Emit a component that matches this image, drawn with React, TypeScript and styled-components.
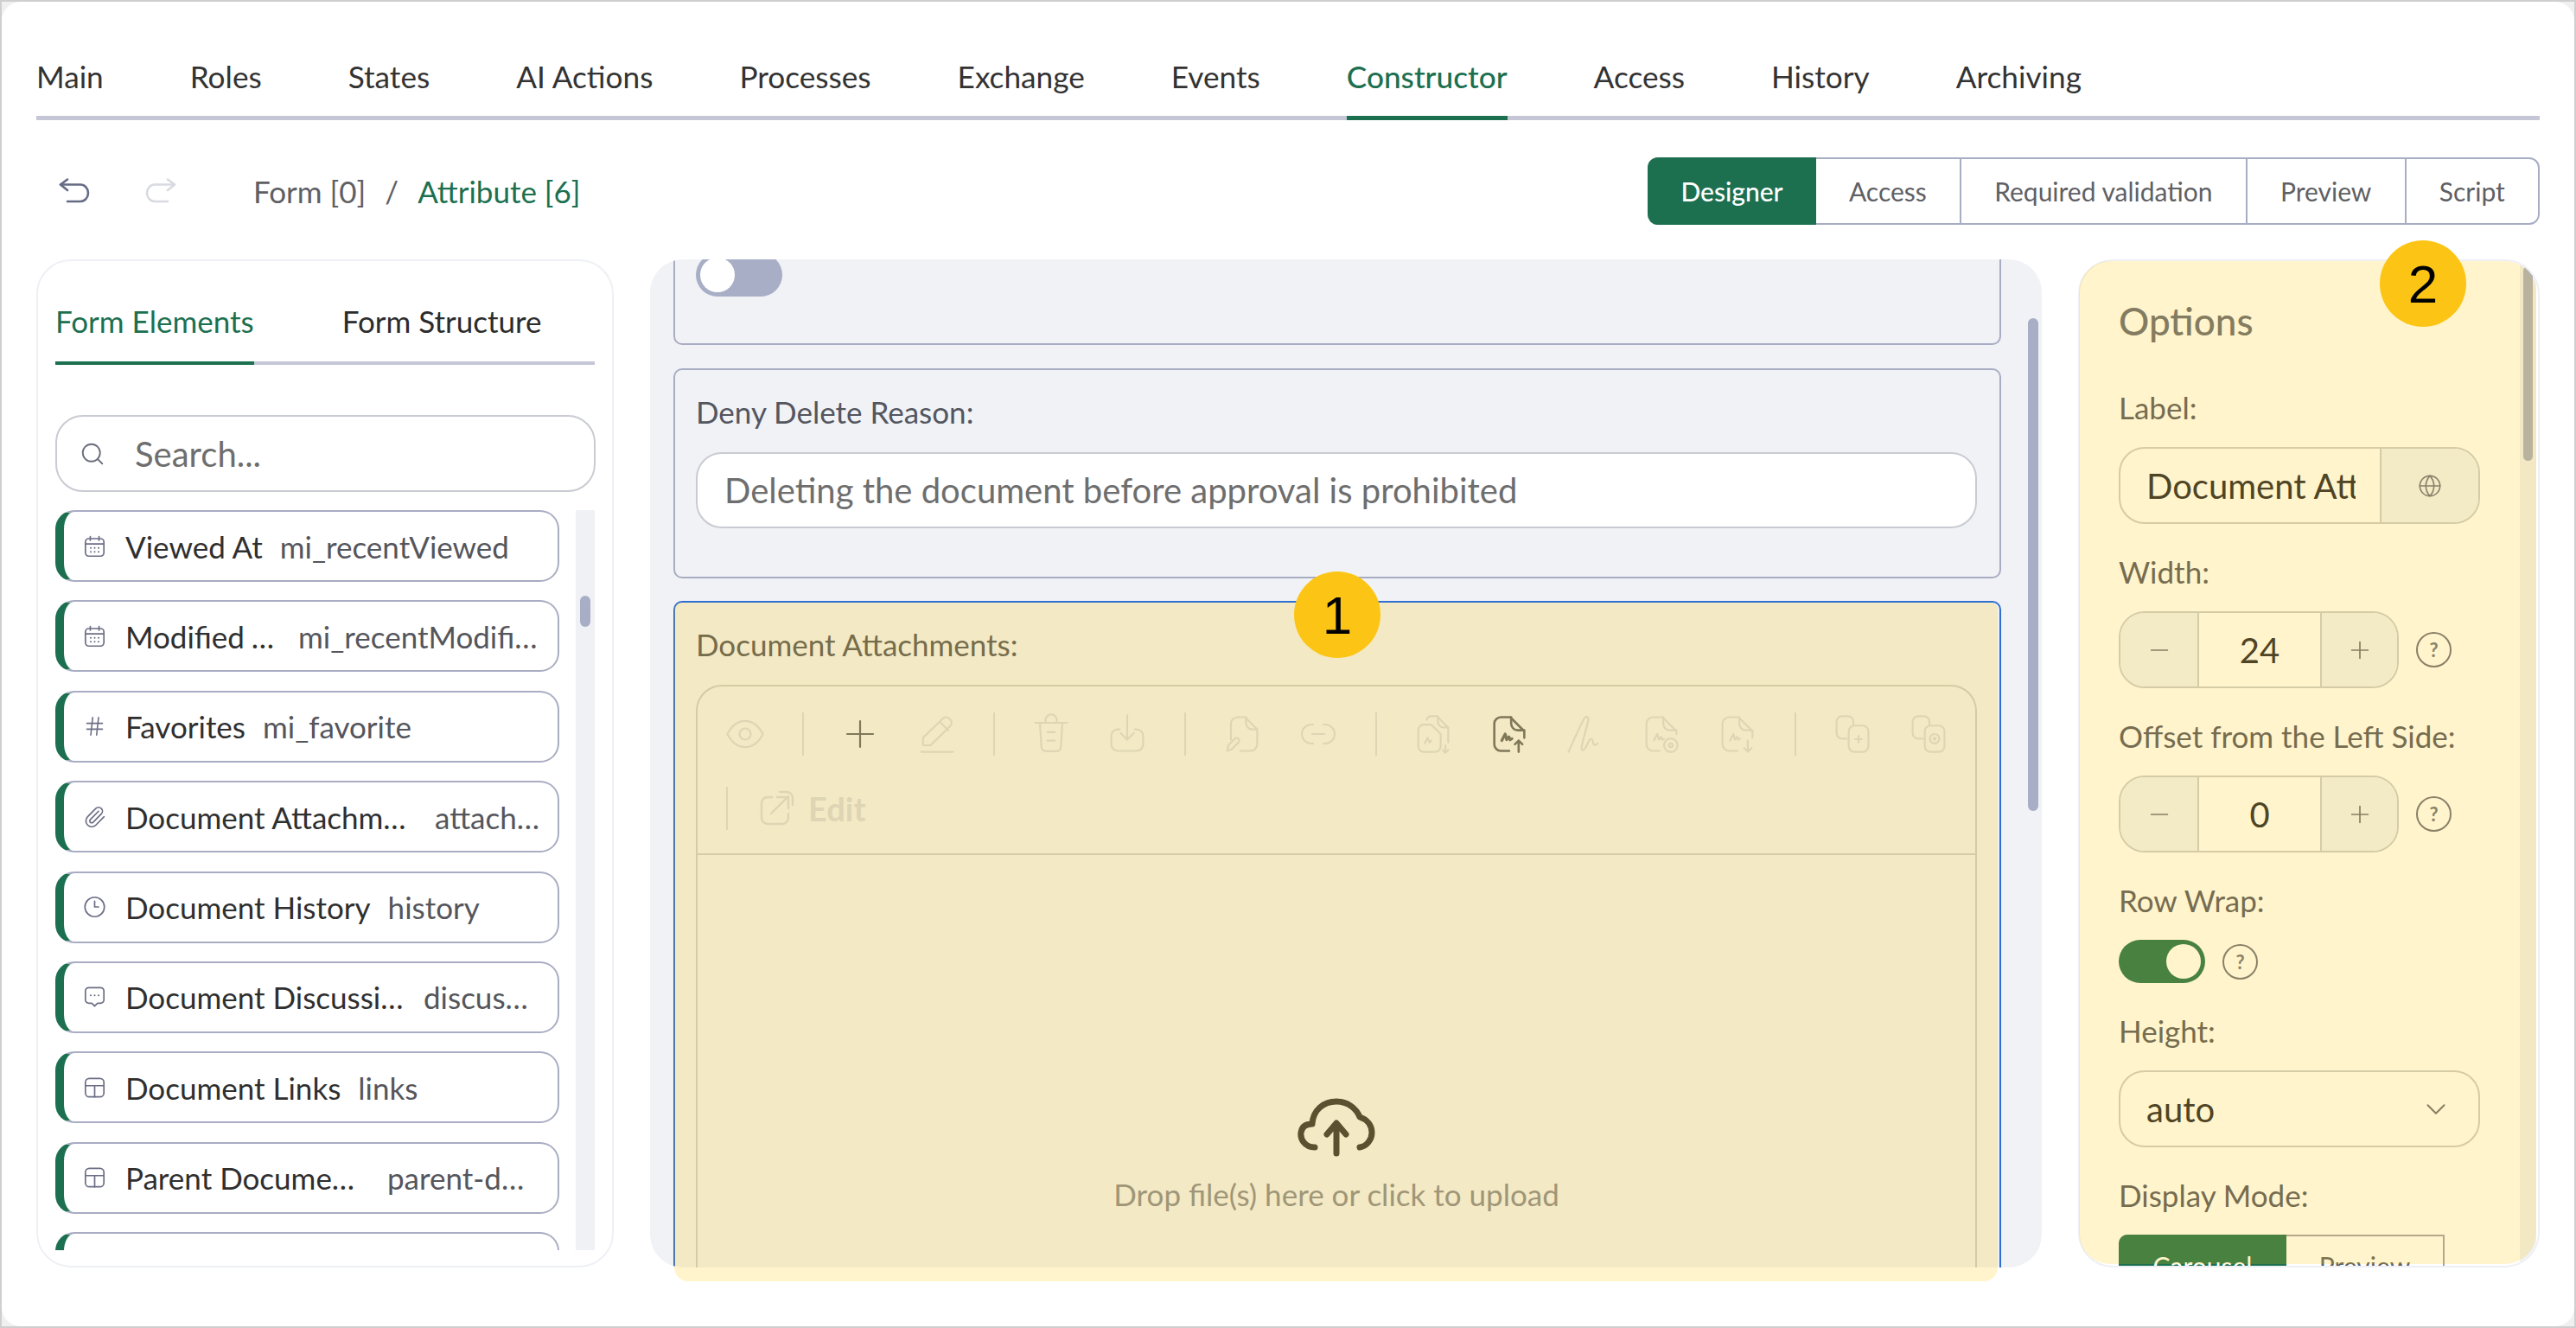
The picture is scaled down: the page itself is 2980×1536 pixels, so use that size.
import React from "react";
import styled, { createGlobalStyle } from "styled-components";
import { Clock3, Globe, Hash, Minus, Paperclip, Plus, Search, ChevronDown } from "lucide-react";

const GREEN = "#1c7050";
const LINE = "#a9adc3";

const Global = createGlobalStyle`
  html, body { margin: 0; padding: 0; background: #fff; }
  * { box-sizing: border-box; }
  body { font-family: Lato, "Open Sans", sans-serif; color: #333; }
`;

const Frame = styled.div`
  position: relative;
  width: 2980px;
  height: 1536px;
  border: 2px solid #cfcfcf;
  background: #f0f0f0;
  overflow: hidden;
`;
const Page = styled.div`
  height: 100%;
  background: #fff;
  border-radius: 22px;
  padding: 0 40px;
  display: flex;
  flex-direction: column;
`;

/* Top tabs */
const TopTabs = styled.nav`
  margin-top: 68px;
  display: flex;
  gap: 100px;
  border-bottom: 5px solid #c5c7d6;
`;
const TopTab = styled.div<{ $active?: boolean }>`
  font-size: 35.2px;
  line-height: 36px;
  padding-bottom: 28px;
  margin-bottom: -5px;
  color: ${(p) => (p.$active ? GREEN : "#333")};
  font-weight: ${(p) => (p.$active ? 500 : 400)};
  border-bottom: 5px solid ${(p) => (p.$active ? GREEN : "transparent")};
`;

/* Toolbar */
const Toolbar = styled.div`
  margin-top: 43px;
  height: 78px;
  display: flex;
  align-items: center;
`;
const History = styled.div`
  display: flex;
  gap: 64px;
  margin-left: 26px;
`;
const HistoryBtn = styled.span<{ $off?: boolean }>`
  display: flex;
  color: ${(p) => (p.$off ? "#d8dae2" : "#666b85")};
`;
const Crumbs = styled.div`
  margin-left: 89px;
  font-size: 35px;
  line-height: 40px;
  color: #5f6064;
  display: flex;
  gap: 22px;
`;
const CrumbNow = styled.span`
  color: ${GREEN};
`;
const Segments = styled.div`
  margin-left: auto;
  height: 78px;
  display: flex;
  border: 2px solid ${LINE};
  border-radius: 12px;
`;
const Segment = styled.div<{ $active?: boolean }>`
  display: flex;
  align-items: center;
  padding: 0 38.2px;
  font-size: 30px;
  color: ${(p) => (p.$active ? "#fff" : "#5f6064")};
  background: ${(p) => (p.$active ? GREEN : "transparent")};
  margin: ${(p) => (p.$active ? "-2px 0 -2px -2px" : "0")};
  border-radius: ${(p) => (p.$active ? "12px 0 0 12px" : "0")};
  font-weight: ${(p) => (p.$active ? 500 : 400)};
  & + & {
    border-left: ${(p) => (p.$active ? "0" : `2px solid ${LINE}`)};
  }
`;
const FirstPlain = styled(Segment)`
  && {
    border-left: 0;
  }
`;

/* Columns */
const Columns = styled.div`
  margin-top: 40px;
  display: grid;
  grid-template-columns: 668px 1610px 534px;
  gap: 42px;
  height: 1166px;
`;
const SidePanel = styled.section`
  border: 2px solid #eef0f5;
  border-radius: 40px;
  background: #fff;
  display: flex;
  flex-direction: column;
  padding: 0 20px 18px;
  overflow: hidden;
`;
const PanelTabs = styled.div`
  padding-top: 51px;
  display: flex;
  gap: 102px;
  border-bottom: 4px solid #c5c7d6;
`;
const PanelTab = styled.div<{ $active?: boolean }>`
  font-size: 35px;
  line-height: 36px;
  padding-bottom: 29px;
  margin-bottom: -4px;
  color: ${(p) => (p.$active ? GREEN : "#2c2c2c")};
  border-bottom: 4px solid ${(p) => (p.$active ? GREEN : "transparent")};
`;
const SearchBox = styled.div`
  margin-top: 58px;
  height: 89px;
  width: 625px;
  border: 2px solid #c9cbd2;
  border-radius: 32px;
  display: flex;
  align-items: center;
  padding-left: 26px;
  gap: 34px;
  font-size: 40px;
  color: #6e6e6e;
  svg {
    color: #6b6e7c;
  }
`;
const ListArea = styled.div`
  margin-top: 21px;
  flex: 1;
  min-height: 0;
  display: flex;
  justify-content: space-between;
  overflow: hidden;
`;
const List = styled.div`
  width: 583px;
  display: flex;
  flex-direction: column;
  gap: 21.4px;
`;
const Row = styled.div`
  flex: none;
  height: 83px;
  border: 2.5px solid ${LINE};
  border-left: 10px solid ${GREEN};
  border-radius: 22px;
  display: flex;
  align-items: center;
  padding: 0 12px 0 22px;
  font-size: 35px;
  white-space: nowrap;
`;
const RowIcon = styled.span`
  flex: none;
  width: 27px;
  height: 32px;
  margin-right: 22px;
  display: flex;
  align-items: center;
  justify-content: center;
  color: #6b6e85;
`;
const RowName = styled.span<{ $w?: number }>`
  color: #2f2f2f;
  ${(p) => (p.$w ? `width:${p.$w}px; overflow:hidden; text-overflow:ellipsis; flex:none;` : "")}
`;
const RowCode = styled.span<{ $w?: number; $gap: number }>`
  margin-left: ${(p) => p.$gap}px;
  color: #55565c;
  ${(p) => (p.$w ? `width:${p.$w}px; overflow:hidden; text-overflow:ellipsis; flex:none;` : "")}
`;
const Track = styled.div`
  width: 22px;
  background: #f0f1f5;
  display: flex;
  justify-content: center;
`;
const Thumb = styled.div`
  margin-top: 99px;
  width: 12px;
  height: 36px;
  border-radius: 6px;
  background: #a8aec6;
`;

/* Center */
const Canvas = styled.section`
  background: #f0f2f6;
  border-radius: 38px;
  overflow: hidden;
  display: flex;
`;
const CanvasBody = styled.div`
  margin-left: 27px;
  margin-top: -20px;
  width: 1536px;
  display: flex;
  flex-direction: column;
  gap: 26.5px;
`;
const CanvasThumb = styled.div`
  margin: 68px 0 0 31px;
  width: 12px;
  height: 570px;
  border-radius: 6px;
  background: #a8aec6;
`;
const Card = styled.div<{ $selected?: boolean }>`
  flex: none;
  border: 2px solid ${(p) => (p.$selected ? "#2f6fd0" : LINE)};
  border-radius: 10px;
  padding: 0 26px 0 24px;
`;
const ToggleCard = styled(Card)`
  height: 119px;
  padding-top: 11px;
`;
const InputCard = styled(Card)`
  height: 243px;
  padding-top: 30px;
`;
const UploadCard = styled(Card)`
  padding-top: 30px;
  height: 900px;
`;
const FieldLabel = styled.div`
  font-size: 35px;
  line-height: 36px;
  padding-bottom: 4px;
  color: #54565f;
`;
const Switch = styled.div<{ $on?: boolean }>`
  width: 100px;
  height: 50px;
  border-radius: 25px;
  background: ${(p) => (p.$on ? GREEN : "#a8aec6")};
  padding: 5px;
  display: flex;
  justify-content: ${(p) => (p.$on ? "flex-end" : "flex-start")};
  &::after {
    content: "";
    width: 40px;
    height: 40px;
    border-radius: 50%;
    background: #fff;
  }
`;
const TextInput = styled.div`
  margin-top: 25px;
  height: 88px;
  background: #fff;
  border: 2px solid #c9cbd2;
  border-radius: 30px;
  display: flex;
  align-items: center;
  padding-left: 31px;
  font-size: 40px;
  color: #6e6e6e;
`;
const UploadBox = styled.div`
  margin-top: 25px;
  border: 2px solid #cbcccf;
  border-bottom: 0;
  border-radius: 30px 30px 0 0;
  height: 800px;
`;
const FileBar = styled.div`
  padding: 12px 4px 9px 11px;
  min-height: 193px;
  display: flex;
  flex-wrap: wrap;
  align-items: center;
  align-content: flex-start;
  border-bottom: 2px solid #cbcccf;
`;
const ToolBtn = styled.span<{ $on?: boolean }>`
  width: 88px;
  height: 86px;
  display: flex;
  align-items: center;
  justify-content: center;
  color: ${(p) => (p.$on ? "#606470" : "#d6d9e1")};
`;
const ToolSep = styled.span`
  width: 2px;
  height: 50px;
  margin: 0 21.5px;
  background: #d6d9e1;
`;
const EditBtn = styled.span`
  height: 86px;
  padding-left: 11px;
  display: flex;
  align-items: center;
  gap: 13px;
  font-size: 38px;
  font-weight: 700;
  color: #d6d9e1;
`;
const DropZone = styled.div`
  padding-top: 281px;
  display: flex;
  flex-direction: column;
  align-items: center;
  color: #32323c;
`;
const DropText = styled.div`
  margin-top: 23px;
  font-size: 35px;
  line-height: 36px;
  color: #888a96;
`;

/* Right */
const OptionsPanel = styled.section`
  border: 2px solid #eef0f5;
  border-radius: 40px;
  overflow: hidden;
  display: flex;
  background: #fff;
`;
const OptionsBody = styled.div`
  flex: 1;
  min-width: 0;
  padding: 45px 0 0 45px;
`;
const OptionsTrack = styled.div`
  flex: none;
  width: 19px;
  margin-right: 2px;
  background: #f0f1f5;
  display: flex;
  justify-content: center;
`;
const OptionsThumb = styled.div`
  margin-top: 6px;
  width: 11px;
  height: 225px;
  border-radius: 6px;
  background: #a8aec6;
`;
const Title = styled.h2`
  margin: 0 0 56px;
  font-size: 44px;
  line-height: 48px;
  padding-bottom: 2px;
  font-weight: 500;
  color: #666978;
`;
const Field = styled.div`
  margin-bottom: 37px;
`;
const OptLabel = styled.div`
  font-size: 35px;
  line-height: 36px;
  margin-bottom: 28px;
  color: #545664;
`;
const FieldRow = styled.div`
  display: flex;
  align-items: center;
  gap: 20px;
`;
const Combo = styled.div`
  width: 418px;
  height: 89px;
  border: 2px solid #cbcccf;
  border-radius: 30px;
  display: flex;
  overflow: hidden;
  font-size: 40px;
  color: #23232e;
`;
const ComboText = styled.div`
  width: 302px;
  border-right: 2px solid #cbcccf;
  padding: 0 28px 0 30px;
  display: flex;
  align-items: center;
`;
const ComboClip = styled.span`
  display: block;
  overflow: hidden;
  white-space: nowrap;
`;
const ComboAddon = styled.div`
  flex: 1;
  background: #f1f3f8;
  display: flex;
  align-items: center;
  justify-content: center;
  color: #6b6e85;
`;
const Stepper = styled.div`
  width: 324px;
  height: 89px;
  border: 2px solid #cbcccf;
  border-radius: 30px;
  display: grid;
  grid-template-columns: 89px 144px 1fr;
  overflow: hidden;
`;
const StepBtn = styled.div`
  background: #f1f3f8;
  display: flex;
  align-items: center;
  justify-content: center;
  color: #6b6e7c;
`;
const StepValue = styled.div`
  border-left: 2px solid #cbcccf;
  border-right: 2px solid #cbcccf;
  display: flex;
  align-items: center;
  justify-content: center;
  font-size: 40px;
  color: #23232e;
`;
const Help = styled.span`
  width: 41px;
  height: 41px;
  border: 2.5px solid #6d7082;
  border-radius: 50%;
  display: flex;
  align-items: center;
  justify-content: center;
  font-size: 22px;
  font-weight: 700;
  color: #6d7082;
`;
const Select = styled(Combo)`
  align-items: center;
  justify-content: space-between;
  padding: 0 30px 0 30px;
  color: #23232e;
  svg {
    color: #6b6e7c;
  }
`;
const Modes = styled.div`
  display: flex;
  width: 377px;
  height: 72px;
  border: 2px solid #a0a2ad;
  border-radius: 10px 0 0 0;
  font-size: 30px;
  color: #5f6064;
`;
const Mode = styled.div<{ $active?: boolean }>`
  flex: ${(p) => (p.$active ? "0 0 194px" : "1")};
  display: flex;
  align-items: center;
  justify-content: center;
  margin: ${(p) => (p.$active ? "-2px 0 -2px -2px" : "0")};
  background: ${(p) => (p.$active ? GREEN : "transparent")};
  border-radius: ${(p) => (p.$active ? "10px 0 0 0" : "0")};
  color: ${(p) => (p.$active ? "#fff" : "#5f6064")};
`;

/* Overlays */
const CardHighlight = styled.div`
  position: absolute;
  left: 778px;
  top: 695px;
  width: 1531px;
  height: 785px;
  background: rgba(255, 200, 0, 0.2);
  border-radius: 8px 8px 16px 16px;
  pointer-events: none;
`;
const PanelHighlight = styled.div`
  position: absolute;
  left: 2403px;
  top: 300px;
  width: 529px;
  height: 1160px;
  background: rgba(255, 200, 0, 0.2);
  border-radius: 36px;
  pointer-events: none;
`;
const Badge = styled.div<{ $x: number; $y: number }>`
  position: absolute;
  left: ${(p) => p.$x}px;
  top: ${(p) => p.$y}px;
  width: 100px;
  height: 100px;
  border-radius: 50%;
  background: #fcc516;
  color: #000;
  font-family: "Liberation Sans", Arial, sans-serif;
  font-size: 62px;
  display: flex;
  align-items: center;
  justify-content: center;
`;

/* Icons */
type P = { size?: number; w?: number };
const Ic: React.FC<React.PropsWithChildren<P>> = ({ size = 52, w = 1, children }) => (
  <svg width={size} height={size} viewBox="0 0 24 24" fill="none" stroke="currentColor" strokeWidth={w} strokeLinecap="round" strokeLinejoin="round">
    {children}
  </svg>
);
const UndoIcon = () => (
  <svg width="36" height="30" viewBox="0 0 36 30" fill="none" stroke="currentColor" strokeWidth="2.6" strokeLinecap="round" strokeLinejoin="round">
    <path d="M10 1.500L2 7.500L10 14" />
    <path d="M2 7.500H25a9 9.750 0 0 1 0 19.500H10" />
  </svg>
);
const RedoIcon = () => (
  <svg width="36" height="30" viewBox="0 0 36 30" fill="none" stroke="currentColor" strokeWidth="2.6" strokeLinecap="round" strokeLinejoin="round">
    <path d="M26 1.500L34 7.500L26 14" />
    <path d="M34 7.500H11a9 9.750 0 0 0 0 19.500H26" />
  </svg>
);
const CalendarIcon = () => (
  <Ic size={28} w={1.5}>
    <rect x="2.5" y="4" width="19" height="18" rx="3.5" />
    <path d="M2.5 9.5h19M7.5 1.8v4M16.5 1.8v4" />
    <path d="M8 13.5h.01M12 13.5h.01M16 13.5h.01M8 17.5h.01M12 17.5h.01M16 17.5h.01" strokeWidth="1.8" />
  </Ic>
);
const ChatIcon = () => (
  <Ic size={28} w={1.5}>
    <path d="M6 2.5h12a3.5 3.5 0 0 1 3.5 3.5v9a3.5 3.5 0 0 1-3.5 3.5h-3l-3 3-3-3H6A3.5 3.5 0 0 1 2.5 15V6A3.5 3.5 0 0 1 6 2.5z" />
    <path d="M8 10.5h.01M12 10.5h.01M16 10.5h.01" strokeWidth="1.8" />
  </Ic>
);
const TableIcon = () => (
  <Ic size={28} w={1.5}>
    <rect x="2.5" y="2.5" width="19" height="19" rx="4" />
    <path d="M2.5 10h19M12 10v11.5" />
  </Ic>
);
const FOLD = "M13 3v3.5a3.5 3.5 0 0 0 3.5 3.5H20";
const SIGN = "M8 15.5l1.8-3.5 .8 3 1.2-1.5 .6 1.6 1-.6";
const Eye = () => (
  <Ic>
    <path d="M2.5 12c2.4-4.6 5.600-7 9.500-7s7.100 2.400 9.500 7c-2.400 4.600-5.600 7-9.500 7s-7.100-2.400-9.500-7z" />
    <circle cx="12" cy="12" r="3" />
  </Ic>
);
const PlusThin = () => (
  <Ic size={40} w={1.3}>
    <path d="M12 3v18M3 12h18" />
  </Ic>
);
const PencilLine = () => (
  <Ic>
    <path d="M4 21.500h17" />
    <path d="M5 18v-4L15.500 3.800a2.500 2.500 0 0 1 3.500 0l.5.5a2.500 2.500 0 0 1 0 3.500L9 18z" />
    <path d="M14 5.500l4.500 4.500" />
  </Ic>
);
const Trash = () => (
  <Ic>
    <path d="M3.500 6h17M9 6V4.500a3 3 0 0 1 6 0V6M6 6l.8 13a2.500 2.500 0 0 0 2.500 2.200h5.400a2.500 2.500 0 0 0 2.500-2.200L18 6" />
    <path d="M10 11h4M10 15.500h4" />
  </Ic>
);
const Download = () => (
  <Ic>
    <path d="M8 9.500H7A3.500 3.500 0 0 0 3.500 13v4.500A3.500 3.500 0 0 0 7 21h10a3.500 3.500 0 0 0 3.500-3.500V13A3.500 3.500 0 0 0 17 9.500h-1" />
    <path d="M12 2v12.500M8.500 11.500l3.500 3.500 3.500-3.500" />
  </Ic>
);
const FileEdit = () => (
  <Ic>
    <path d="M6 15V6.500A3.500 3.500 0 0 1 9.500 3h4L20 9.500v8a3.500 3.500 0 0 1-3.500 3.500H11" />
    <path d="M14 3v3a3.500 3.500 0 0 0 3.500 3.500H20" />
    <path d="M4 21l.6-3 3.400-3.500a1.400 1.400 0 0 1 2 2L6.600 20z" />
  </Ic>
);
const LinkPill = () => (
  <Ic size={48}>
    <path d="M9 6.500H8a5.500 5.500 0 0 0 0 11h1M15 6.500h1a5.500 5.500 0 0 1 0 11h-1M8.500 12h7" />
  </Ic>
);
const FileCopy = () => (
  <Ic>
    <path d="M8.500 4.500A2.500 2.500 0 0 1 11 2.500h3L20 8.500v8M14.500 2.500v3a3 3 0 0 0 3 3H20" />
    <path d="M4 10a3 3 0 0 1 3-3h4l5 5v6.500a3 3 0 0 1-3 3H7a3 3 0 0 1-3-3z" />
    <path d="M7.500 17l1.500-3 1 2.500 1-1" />
    <path d="M18.500 18v4M17 20.500l1.500 1.500 1.500-1.500" />
  </Ic>
);
const FileUp = () => (
  <Ic w={1.2}>
    <path d="M12 21H7.500A3.500 3.500 0 0 1 4 17.500v-11A3.500 3.500 0 0 1 7.500 3h5L20 10.500V14" />
    <path d={FOLD} />
    <path d={SIGN} strokeWidth="1.5" />
    <path d="M17 21.500v-6M15 17.500l2-2 2 2" />
  </Ic>
);
const SignIcon = () => (
  <Ic>
    <path d="M3 21.500C6 15 9.500 7 11.500 3.500c1-1.500 2.500-.5 2 1.500-1 4.500-3 10.500-3.500 14-.3 2 1 2 2 .5l2-4c.8-1.500 2-1 2 .5 0 1.500.8 2.500 2.500 1" />
  </Ic>
);
const FileGear = () => (
  <Ic>
    <path d="M11 21H7.500A3.500 3.500 0 0 1 4 17.500v-11A3.500 3.500 0 0 1 7.500 3h5L20 10.500V12" />
    <path d={FOLD} />
    <path d={SIGN} />
    <circle cx="17" cy="18" r="3.600" />
    <circle cx="17" cy="18" r="1" />
  </Ic>
);
const FileDown = () => (
  <Ic>
    <path d="M12 21H7.500A3.500 3.500 0 0 1 4 17.500v-11A3.500 3.500 0 0 1 7.500 3h5L20 10.500V14" />
    <path d={FOLD} />
    <path d={SIGN} />
    <path d="M17.500 15.500v6M15.500 19.500l2 2 2-2" />
  </Ic>
);
const CopyPlus = () => (
  <Ic>
    <path d="M9 14.500H6.500A3 3 0 0 1 3.500 11.500V5.500a3 3 0 0 1 3-3h3a3 3 0 0 1 3 3V7" />
    <rect x="10" y="7.500" width="10.500" height="14" rx="3" />
    <path d="M15.250 13v3.500M13.500 14.750H17" />
  </Ic>
);
const CopyTarget = () => (
  <Ic>
    <path d="M9 14.500H6.500A3 3 0 0 1 3.500 11.500V5.500a3 3 0 0 1 3-3h3a3 3 0 0 1 3 3V7" />
    <rect x="10" y="7.500" width="10.500" height="14" rx="3" />
    <circle cx="15.250" cy="14.500" r="2.500" />
    <circle cx="15.250" cy="14.500" r=".5" />
  </Ic>
);
const ExternalEdit = () => (
  <Ic size={48} w={1.2}>
    <path d="M9.500 5.500H7A3.500 3.500 0 0 0 3.500 9v8.500A3.500 3.500 0 0 0 7 21h8.500a3.500 3.500 0 0 0 3.500-3.500V15" />
    <path d="M14 2.500h4a3.500 3.500 0 0 1 3.500 3.500v4" />
    <path d="M19 5L9 15M12.500 5.500H19V12" />
  </Ic>
);
const Cloud = () => (
  <svg width="90" height="70" viewBox="0 0 90 70" fill="none" stroke="currentColor" strokeWidth="7" strokeLinecap="round" strokeLinejoin="round">
    <path d="M20 57C8 57 3 47 4 40c1-7 6-10 13-10C18 14 30 4 45 4c13 0 23 8 27 18 9 3 14 10 14 18s-6 16-14 17" />
    <path d="M45 64V30M34 42l11-13 11 13" />
  </svg>
);

const tabs = ["Main", "Roles", "States", "AI Actions", "Processes", "Exchange", "Events", "Constructor", "Access", "History", "Archiving"];

const rows: { icon: React.ReactNode; name: string; code: string; nameW?: number; codeW?: number; gap: number }[] = [
  { icon: <CalendarIcon />, name: "Viewed At", code: "mi_recentViewed", gap: 20 },
  { icon: <CalendarIcon />, name: "Modified At", code: "mi_recentModified", nameW: 176, codeW: 278, gap: 24 },
  { icon: <Hash size={30} strokeWidth={1.4} />, name: "Favorites", code: "mi_favorite", gap: 20 },
  { icon: <Paperclip size={28} strokeWidth={1.5} />, name: "Document Attachments", code: "attachments", nameW: 330, codeW: 124, gap: 28 },
  { icon: <Clock3 size={28} strokeWidth={1.5} />, name: "Document History", code: "history", gap: 20 },
  { icon: <ChatIcon />, name: "Document Discussions", code: "discussions", nameW: 325, codeW: 124, gap: 20 },
  { icon: <TableIcon />, name: "Document Links", code: "links", gap: 20 },
  { icon: <TableIcon />, name: "Parent Documents", code: "parent-documents", nameW: 270, codeW: 162, gap: 33 },
  { icon: null, name: "", code: "", gap: 0 },
];

export default function App() {
  return (
    <Frame>
      <Global />
      <Page>
        <TopTabs>
          {tabs.map((t) => (
            <TopTab key={t} $active={t === "Constructor"}>
              {t}
            </TopTab>
          ))}
        </TopTabs>
        <Toolbar>
          <History>
            <HistoryBtn>
              <UndoIcon />
            </HistoryBtn>
            <HistoryBtn $off>
              <RedoIcon />
            </HistoryBtn>
          </History>
          <Crumbs>
            <span>Form [0]</span>
            <span>/</span>
            <CrumbNow>Attribute [6]</CrumbNow>
          </Crumbs>
          <Segments>
            <Segment $active>Designer</Segment>
            <FirstPlain>Access</FirstPlain>
            <Segment>Required validation</Segment>
            <Segment>Preview</Segment>
            <Segment>Script</Segment>
          </Segments>
        </Toolbar>
        <Columns>
          <SidePanel>
            <PanelTabs>
              <PanelTab $active>Form Elements</PanelTab>
              <PanelTab>Form Structure</PanelTab>
            </PanelTabs>
            <SearchBox>
              <Search size={30} strokeWidth={1.5} />
              <span>Search...</span>
            </SearchBox>
            <ListArea>
              <List>
                {rows.map((r, i) => (
                  <Row key={i}>
                    <RowIcon>{r.icon}</RowIcon>
                    <RowName $w={r.nameW}>{r.name}</RowName>
                    <RowCode $w={r.codeW} $gap={r.gap}>
                      {r.code}
                    </RowCode>
                  </Row>
                ))}
              </List>
              <Track>
                <Thumb />
              </Track>
            </ListArea>
          </SidePanel>

          <Canvas>
            <CanvasBody>
              <ToggleCard>
                <Switch />
              </ToggleCard>
              <InputCard>
                <FieldLabel>Deny Delete Reason:</FieldLabel>
                <TextInput>Deleting the document before approval is prohibited</TextInput>
              </InputCard>
              <UploadCard $selected>
                <FieldLabel>Document Attachments:</FieldLabel>
                <UploadBox>
                  <FileBar>
                    <ToolBtn><Eye /></ToolBtn>
                    <ToolSep />
                    <ToolBtn $on><PlusThin /></ToolBtn>
                    <ToolBtn><PencilLine /></ToolBtn>
                    <ToolSep />
                    <ToolBtn><Trash /></ToolBtn>
                    <ToolBtn><Download /></ToolBtn>
                    <ToolSep />
                    <ToolBtn><FileEdit /></ToolBtn>
                    <ToolBtn><LinkPill /></ToolBtn>
                    <ToolSep />
                    <ToolBtn><FileCopy /></ToolBtn>
                    <ToolBtn $on><FileUp /></ToolBtn>
                    <ToolBtn><SignIcon /></ToolBtn>
                    <ToolBtn><FileGear /></ToolBtn>
                    <ToolBtn><FileDown /></ToolBtn>
                    <ToolSep />
                    <ToolBtn><CopyPlus /></ToolBtn>
                    <ToolBtn><CopyTarget /></ToolBtn>
                    <ToolSep />
                    <EditBtn>
                      <ExternalEdit />
                      Edit
                    </EditBtn>
                  </FileBar>
                  <DropZone>
                    <Cloud />
                    <DropText>Drop file(s) here or click to upload</DropText>
                  </DropZone>
                </UploadBox>
              </UploadCard>
            </CanvasBody>
            <CanvasThumb />
          </Canvas>

          <OptionsPanel>
            <OptionsBody>
              <Title>Options</Title>
              <Field>
                <OptLabel>Label:</OptLabel>
                <Combo>
                  <ComboText>
                    <ComboClip>Document Attachments</ComboClip>
                  </ComboText>
                  <ComboAddon>
                    <Globe size={28} strokeWidth={1.4} />
                  </ComboAddon>
                </Combo>
              </Field>
              <Field>
                <OptLabel>Width:</OptLabel>
                <FieldRow>
                  <Stepper>
                    <StepBtn><Minus size={32} strokeWidth={1.3} /></StepBtn>
                    <StepValue>24</StepValue>
                    <StepBtn><Plus size={32} strokeWidth={1.3} /></StepBtn>
                  </Stepper>
                  <Help>?</Help>
                </FieldRow>
              </Field>
              <Field>
                <OptLabel>Offset from the Left Side:</OptLabel>
                <FieldRow>
                  <Stepper>
                    <StepBtn><Minus size={32} strokeWidth={1.3} /></StepBtn>
                    <StepValue>0</StepValue>
                    <StepBtn><Plus size={32} strokeWidth={1.3} /></StepBtn>
                  </Stepper>
                  <Help>?</Help>
                </FieldRow>
              </Field>
              <Field>
                <OptLabel>Row Wrap:</OptLabel>
                <FieldRow>
                  <Switch $on />
                  <Help>?</Help>
                </FieldRow>
              </Field>
              <Field>
                <OptLabel>Height:</OptLabel>
                <Select>
                  <span>auto</span>
                  <ChevronDown size={38} strokeWidth={1.3} />
                </Select>
              </Field>
              <Field>
                <OptLabel>Display Mode:</OptLabel>
                <Modes>
                  <Mode $active>Carousel</Mode>
                  <Mode>Preview</Mode>
                </Modes>
              </Field>
            </OptionsBody>
            <OptionsTrack>
              <OptionsThumb />
            </OptionsTrack>
          </OptionsPanel>
        </Columns>
      </Page>
      <CardHighlight />
      <PanelHighlight />
      <Badge $x={1495} $y={659}>1</Badge>
      <Badge $x={2751} $y={276}>2</Badge>
    </Frame>
  );
}
